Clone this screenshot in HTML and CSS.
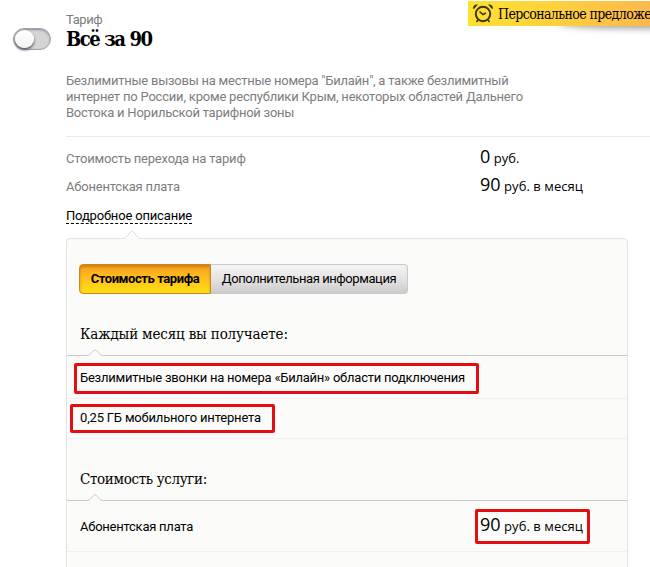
FILE: index.html
```html
<!DOCTYPE html>
<html lang="ru">
<head>
    <meta charset="UTF-8">
    <meta name="viewport" content="width=device-width, initial-scale=1.0">
    <title>Всё за 90</title>
    <link rel="stylesheet" href="styles.css">
</head>
<body>
    <div class="promo">
        <div class="promo-ribbon">
            <svg class="promo-icon" width="20" height="19" viewBox="0 0 20 19" fill="none" stroke="#3b3510">
                <circle cx="10" cy="10" r="7.2" stroke-width="2"/>
                <path d="M6.5 7.5 10 10.5 13 9" stroke-width="1.6"/>
                <path d="M5 16 3.5 18M15 16l1.5 2" stroke-width="1.6"/>
                <path d="M0 4.5C0 1.5 2 0 5 .5L1 5ZM20 4.5C20 1.5 18 0 15 .5L19 5Z" fill="#3b3510" stroke="none"/>
            </svg>
            <span class="promo-text">Персональное предложение</span>
        </div>
    </div>

    <div class="tariff">
        <div class="toggle"><div class="toggle-knob"></div></div>

        <div class="tariff-body">
            <div class="tariff-label">Тариф</div>
            <h1 class="tariff-title">Всё за 90</h1>
            <p class="tariff-text">
                Безлимитные вызовы на местные номера "Билайн", а также безлимитный<br>
                <span class="line-wide">интернет по России, кроме республики Крым, некоторых областей Дальнего</span><br>
                Востока и Норильской тарифной зоны
            </p>

            <div class="costs">
                <div class="cost-row">
                    <span class="cost-name">Стоимость перехода на тариф</span>
                    <span class="price"><b>0</b> руб.</span>
                </div>
                <div class="cost-row">
                    <span class="cost-name">Абонентская плата</span>
                    <span class="price"><b>90</b> руб. в месяц</span>
                </div>
            </div>

            <a class="details-link">Подробное описание</a>

            <div class="panel">
                <svg class="panel-arrow" width="22" height="10" viewBox="0 0 22 10">
                    <path d="M0 8.5C5 8.5 5 7.5 9.5 2Q11 .2 12.5 2C17 7.5 17 8.5 22 8.5V10H0Z" fill="#fbfbf9"/>
                    <path d="M0 8.5C5 8.5 5 7.5 9.5 2Q11 .2 12.5 2C17 7.5 17 8.5 22 8.5" fill="none" stroke="#e1e1e1"/>
                </svg>

                <div class="tabs">
                    <div class="tab tab-active">Стоимость тарифа</div>
                    <div class="tab">Дополнительная информация</div>
                </div>

                <h2 class="section-title title-month">Каждый месяц вы получаете:
                    <svg class="section-arrow" width="16" height="8" viewBox="0 0 16 8">
                        <path d="M0 6.5C3 6.5 4 4 6.5 1.5Q8 0 9.5 1.5C12 4 13 6.5 16 6.5V8H0Z" fill="#fbfbf9"/>
                        <path d="M0 6.5C3 6.5 4 4 6.5 1.5Q8 0 9.5 1.5C12 4 13 6.5 16 6.5" fill="none" stroke="#c9c9c9"/>
                    </svg>
                </h2>
                <div class="row">
                    <span class="mark mark-calls">Безлимитные звонки на номера «Билайн» области подключения</span>
                </div>
                <div class="row">
                    <span class="mark mark-data">0,25 ГБ мобильного интернета</span>
                </div>

                <h2 class="section-title title-service">Стоимость услуги:
                    <svg class="section-arrow" width="16" height="8" viewBox="0 0 16 8">
                        <path d="M0 6.5C3 6.5 4 4 6.5 1.5Q8 0 9.5 1.5C12 4 13 6.5 16 6.5V8H0Z" fill="#fbfbf9"/>
                        <path d="M0 6.5C3 6.5 4 4 6.5 1.5Q8 0 9.5 1.5C12 4 13 6.5 16 6.5" fill="none" stroke="#c9c9c9"/>
                    </svg>
                </h2>
                <div class="row row-price">
                    <span class="row-name">Абонентская плата</span>
                    <span class="price mark mark-price"><b>90</b> руб. в месяц</span>
                </div>
            </div>
        </div>
    </div>
</body>
</html>
```

FILE: styles.css
```css
*,
*::before,
*::after {
    box-sizing: border-box;
}

body {
    margin: 0;
    height: 567px;
    position: relative;
    overflow: hidden;
    background: #fff;
    color: #000;
    font: 13px/16px Roboto, "Liberation Sans", sans-serif;
    letter-spacing: -0.24px;
    white-space: nowrap;
}

.promo {
    position: absolute;
    top: 1px;
    left: 468px;
    width: 182px;
    height: 40px;
    overflow: hidden;
}

.promo::before {
    content: '';
    position: absolute;
    top: 17px;
    left: 90px;
    width: 180px;
    height: 11px;
    border-radius: 50%;
    background: rgba(0, 0, 0, 0.35);
    filter: blur(3px);
}

.promo-ribbon {
    position: relative;
    display: flex;
    align-items: center;
    width: 182px;
    height: 25px;
    padding-left: 5px;
    overflow: hidden;
    background: linear-gradient(to right, #ffe02f, #ffd23c 45%, #fdb94b);
}

.promo-icon {
    flex: none;
}

.promo-text {
    margin-left: 5px;
    font: 14px/24px "DejaVu Serif Condensed", "DejaVu Serif", serif;
    font-stretch: condensed;
    letter-spacing: -0.6px;
}

.tariff {
    display: flex;
    padding: 12px 0 0 13px;
}

.toggle {
    width: 38px;
    height: 22px;
    margin-top: 16px;
    border: 1px solid #a3a3ad;
    border-radius: 11px;
    background: #d5d5d5;
    box-shadow: inset 0 1px 2px #8c8c98;
}

.toggle-knob {
    width: 19px;
    height: 18px;
    margin: 1px;
    border-radius: 50%;
    background: linear-gradient(#fff, #f4f4f4);
    box-shadow: 0 2px 3px #555568;
}

.tariff-body {
    width: 562px;
    margin-left: 15px;
}

.tariff-label {
    color: #7d7d7d;
    letter-spacing: -0.4px;
}

.tariff-title {
    margin: 0;
    font: bold 20px/22px "DejaVu Serif Condensed", "DejaVu Serif", serif;
    font-stretch: condensed;
    letter-spacing: -1.4px;
}

.tariff-text {
    width: 584px;
    height: 64px;
    margin: 23px 0 0;
    border-bottom: 1px solid #e9e9e9;
    color: #7d7d7d;
}

.line-wide {
    letter-spacing: -0.2px;
}

.costs {
    padding-top: 5px;
}

.cost-row {
    display: flex;
    align-items: baseline;
    height: 28px;
    line-height: 28px;
}

.cost-name {
    width: 414px;
    color: #7d7d7d;
    letter-spacing: -0.2px;
}

.price {
    font: 13px/28px "Open Sans", "Noto Sans", sans-serif;
    letter-spacing: 0.05px;
}

.price b {
    font-size: 18px;
    font-weight: 400;
}

.details-link {
    display: inline-block;
    margin-top: 10px;
    line-height: 15px;
    letter-spacing: -0.17px;
    border-bottom: 1px dashed #000;
}

.panel {
    position: relative;
    height: 345px;
    margin-top: 14px;
    padding-top: 25px;
    border: 1px solid #e3e3e3;
    border-radius: 4px 4px 0 0;
    background: #fbfbf9;
}

.panel-arrow {
    position: absolute;
    top: -9px;
    left: 54px;
}

.tabs {
    display: flex;
    width: 329px;
    height: 30px;
    margin-left: 12px;
}

.tab {
    flex: 1;
    border: 1px solid #c9c9c9;
    border-left: 0;
    border-radius: 0 4px 4px 0;
    background: linear-gradient(#f5f5f5, #e4e2e3 50%, #cdcacb);
    line-height: 28px;
    text-align: center;
    letter-spacing: -0.42px;
}

.tab-active {
    flex: none;
    width: 132px;
    border: 1px solid #c98a1c;
    border-radius: 4px 0 0 4px;
    background: linear-gradient(#f9a01f, #ffbd1e 45%, #ffe014);
    box-shadow: inset 0 2px 3px rgba(160, 80, 0, 0.45);
    font-weight: 700;
}

.section-title {
    position: relative;
    height: 62px;
    margin: 0;
    padding: 30px 0 0 13px;
    border-bottom: 1px solid #c9c9c9;
    font: 15px/20px "DejaVu Serif Condensed", "DejaVu Serif", serif;
    font-stretch: condensed;
}

.title-month {
    letter-spacing: -0.16px;
}

.title-service {
    letter-spacing: -0.35px;
}

.section-arrow {
    position: absolute;
    left: 20px;
    bottom: -2px;
}

.row {
    height: 43px;
    padding-left: 13px;
    border-bottom: 1px solid #f1f1f0;
    line-height: 43px;
}

.row + .row {
    height: 40px;
    line-height: 37px;
}

.row-price {
    display: flex;
    align-items: baseline;
    height: 51px;
    line-height: 52px;
}

.row-price .row-name {
    width: 400px;
}

.mark {
    position: relative;
}

/* red frames drawn over the rows */
.mark::after {
    content: '';
    position: absolute;
    border: 3px solid #e40d12;
    border-radius: 2px;
}

.mark-calls::after {
    top: -7px;
    left: -6px;
    width: 405px;
    height: 31px;
}

.mark-data {
    letter-spacing: -0.18px;
}

.mark-data::after {
    top: -6px;
    left: -10px;
    width: 205px;
    height: 29px;
}

.mark-price::after {
    top: -1px;
    left: -5px;
    width: 115px;
    height: 35px;
}
```
